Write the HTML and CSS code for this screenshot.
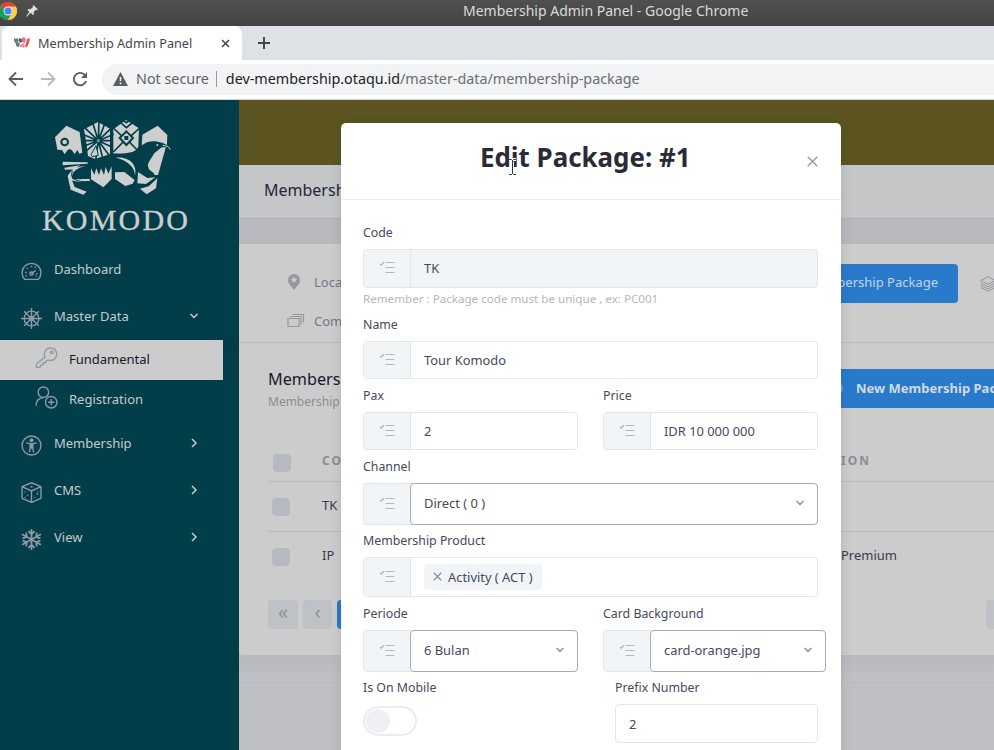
FILE: index.html
```html
<!DOCTYPE html>
<html lang="en">
<head>
<meta charset="utf-8">
<title>Membership Admin Panel</title>
<link rel="stylesheet" href="styles.css">
</head>
<body>
<svg class="defs" width="0" height="0">
  <symbol id="list" viewBox="0 0 16 14"><path d="M1 3l1.200 1L5 1.200" fill="none" stroke="#b4b6c2" stroke-width="1.400"/><path d="M6.500 1.500h9M6.500 6.500h9M6.500 11.500h9" fill="none" stroke="#b4b6c2" stroke-width="1.200"/></symbol>
  <symbol id="right" viewBox="0 0 10 10"><path d="M3 1l4 4-4 4" fill="none" stroke="currentColor" stroke-width="1.500"/></symbol>
  <symbol id="down" viewBox="0 0 10 10"><path d="M1.500 3L5 6.500 8.500 3" fill="none" stroke="currentColor" stroke-width="1.500"/></symbol>
</svg>
<div class="titlebar">
  <svg class="chrome" width="20" height="20" viewBox="0 0 20 20"><circle cx="10" cy="10" r="9" fill="#f2c33d"/><path d="M10 10L2.200 5.500A9 9 0 0 1 17.800 5.500z" fill="#dc4437"/><path d="M10 10L2.200 5.500A9 9 0 0 0 10 19l4-7z" fill="#149e58"/><path d="M10 5.500h7.800A9 9 0 0 1 10 19l4-7z" fill="#fccd46"/><circle cx="10" cy="10" r="4.500" fill="#f3f5f8"/><circle cx="10" cy="10" r="3.600" fill="#4486ef"/></svg>
  <svg class="pin" width="12" height="12" viewBox="0 0 12 12"><path d="M7.500 0L12 4.500l-1.200.6-.8-.4-2.300 2.300.3 2-1 1-2.300-2.300L1 11.500H0L3.300 7 1.500 5l1-1 2 .3 2.500-2.400-.3-.9z" fill="#dedede"/></svg>
  <span class="wintitle">Membership Admin Panel - Google Chrome</span>
</div>
<div class="tabs">
  <div class="tab">
    <svg width="16" height="12" viewBox="0 0 16 12"><path d="M0 1l2 1 1-1 2 2-1 2 2 2-1 3-3-1V7L0 4z" fill="#5a8582"/><path d="M5 1l3 1 0 3-2 1-1-2z" fill="#8d5148"/><path d="M8 1l2-1 2 2-1 4-3-1z" fill="#e8749a"/><path d="M13 2l3-1-1 5-2 4-2 0 1-4z" fill="#dd5a43"/><path d="M5 7l2 1 2-2 2 2-1 3-2-1-2 0z" fill="#e58fa5"/></svg>
    <span>Membership Admin Panel</span>
    <svg class="tabx" width="9" height="9" viewBox="0 0 9 9"><path d="M1 1l7 7M8 1l-7 7" stroke="#45484c" stroke-width="1.600"/></svg>
  </div>
  <svg class="plus" width="12" height="12" viewBox="0 0 12 12"><path d="M6 0v12M0 6h12" stroke="#3f4246" stroke-width="1.900"/></svg>
</div>
<div class="toolbar">
  <svg width="16" height="16" viewBox="0 0 16 16"><path d="M15 8H2M8 1.500L1.500 8 8 14.500" fill="none" stroke="#5a5d61" stroke-width="1.800"/></svg>
  <svg width="16" height="16" viewBox="0 0 16 16"><path d="M1 8h13M8 1.500L14.500 8 8 14.500" fill="none" stroke="#b9bbbe" stroke-width="1.800"/></svg>
  <svg width="16" height="16" viewBox="0 0 16 16"><path d="M14 10a6.200 6.200 0 1 1-1.600-6.400L14 5.200" fill="none" stroke="#5a5d61" stroke-width="1.900"/><path d="M15 1v6H9z" fill="#5a5d61"/></svg>
  <div class="address">
    <svg width="15" height="14" viewBox="0 0 15 14"><path d="M7.500 0L15 14H0z" fill="#5a5d61"/><path d="M7.500 5v4M7.500 10.500v1.700" stroke="#f1f3f4" stroke-width="1.500"/></svg>
    <span class="notsecure">Not secure</span><i></i><span class="url">dev-membership.otaqu.id<em>/master-data/membership-package</em></span>
  </div>
</div>
<div class="app">
  <aside class="sidebar">
    <div class="brand">
      <svg class="emblem" width="125" height="80" viewBox="150 51 375 240">
        <g fill="#cdcece">
          <path d="M165 112l34-35 40 19 8 62-9 3-6-11-8 12-9-12-7-3-5 3-9 13-8-13-14-1z"/>
          <path d="M252 88l42-22 36 20v78l-43 22-3-10-20-8-4-32z"/>
          <path d="M340 88l38-28 39 25-2 55-12 20-63 2z"/>
          <path d="M427 104l46-27 29 28-1 25-27 95-22 0-27-90z"/>
        </g>
        <g stroke="#023e49" stroke-width="5" fill="none">
          <path d="M295 122L276 62M295 122l2-62M295 122l22-58M295 122l41-40M295 122l46-19M295 122l44 0M295 122l42 20M295 122l34 46M295 122l14 56M295 122l-8 60M295 122l-45 38M295 122l-45 17M295 122h-47M295 122l-48-19M295 122l-42-40"/>
          <path d="M340 84l39 36 40-36M340 156l39-40 38 40M360 66l19 17 21-17M361 54l18 14 19-14"/>
          <path d="M379 94l20 20-20 21-20-21z" fill="#cdcece" stroke-width="6"/>
        </g>
        <circle cx="295" cy="122" r="5" fill="#6f9198"/>
        <path d="M373 108h12v12h-12z" fill="#023e49"/>
        <path d="M273 164l15-27 7 29-18 4z" fill="#cdcece" stroke="#023e49" stroke-width="3"/>
        <g fill="#023e49">
          <circle cx="194" cy="126" r="13"/>
          <path d="M262 184l70-22c20-5 32 3 50-3 18-4 25-6 37-19 14-8 22-18 48-16l22 5 14 8-2 5-16 0-22 18-16 25-7 18 20 15 8 14-28 1-15-10-18 22-22 2-70-20-58-28z"/>
        </g>
        <g fill="#cdcece">
          <circle cx="194" cy="126" r="7"/><circle cx="472" cy="135" r="3"/>
          <path d="M273 205l10 19 6-19 8 20 6-20 9 20 5-24 8 20 10-22v38l-25 25-37-24z"/>
          <path d="M345 217l28-1 31 24-6 11-22 7-31-21z"/>
          <path d="M414 216l28 18 24-2-28 20-26-2z"/>
          <path d="M472 235l-4 30-28 18-20-17 26-7z"/>
          <path d="M188 185l75 2v4l-75 5zM193 203l48-7-18 12-28 1zM203 229c8-17 22-30 55-32-31 8-46 21-41 40 10 1 30 0 51-1l3 8c-24 3-42 2-55-3l8 20 36 14-10 9-38-15z"/>
          <path d="M348 173c40-2 65 20 57 55 0-27-22-46-57-55z"/>
        </g>
        <path d="M217 213c-4 11-2 19 4 24 14 8 29 9 49 7" fill="none" stroke="#023e49" stroke-width="3"/>
        <path d="M488 136l16 3 7 10" fill="none" stroke="#cdcece" stroke-width="3"/>
      </svg>
      <svg class="word" width="160" height="36" viewBox="0 0 160 36"><text x="2" y="28" textLength="146" lengthAdjust="spacing">KOMODO</text></svg>
    </div>
    <nav>
      <a class="item"><svg viewBox="0 0 20 20"><path d="M3.500 17.500A9 9 0 1 1 16.500 17.500zM10 12l4-3M10 4.500v1.500M4 11h1.500M14.500 12H16M5.500 6.500l1 1M14 5.500l-.8 1M4.500 14.500l1-.5M15 14.500l-1-.5"/><circle cx="10" cy="12" r="1.500"/></svg><span>Dashboard</span></a>
      <a class="item"><svg viewBox="0 0 20 20"><circle cx="10" cy="10" r="7"/><circle cx="10" cy="10" r="2"/><path d="M10 0v20M0 10h20M3 3l14 14M17 3L3 17"/></svg><span>Master Data</span><svg class="chev"><use href="#down"/></svg></a>
      <a class="sub active"><svg viewBox="0 0 22 22"><path d="M9.500 10.500A6 6 0 1 1 13 13.500l-2 .3-1 2-2 .2-.5 2-2 .2-.7 2.300H1.500v-3.500z"/><circle cx="16" cy="6" r="1.300"/></svg><span>Fundamental</span></a>
      <a class="sub"><svg viewBox="0 0 22 22"><circle cx="8" cy="6" r="5"/><path d="M1 19c0-5 2.500-7.500 7-8M11 9.800l1 .7"/><circle cx="15.500" cy="15.500" r="5.500"/><path d="M15.500 12.500v6M12.500 15.500h6"/></svg><span>Registration</span></a>
      <a class="item"><svg viewBox="0 0 20 20"><circle cx="10" cy="10" r="9"/><circle cx="10" cy="5" r="1.300" fill="#a0a4b2"/><path d="M5 7.500l5 1 5-1M8.700 8.500v4L8 16.500M11.300 8.500v4l.7 4M10 8v5"/></svg><span>Membership</span><svg class="chev"><use href="#right"/></svg></a>
      <a class="item"><svg viewBox="0 0 20 20"><path d="M1 4.500L10 .8l9 3.700v11L10 19.500l-9-4zM1 4.500L10 8.500l9-4M10 8.500v11M9 4.500h2M4 9v1M6.500 12v1M4 14v1M13 14v1M16 9v1M15 12l1-1"/></svg><span>CMS</span><svg class="chev"><use href="#right"/></svg></a>
      <a class="item"><svg viewBox="0 0 20 20" class="snow"><path d="M10 0v20M1 5l18 10M19 5L1 15M7 2l3 3 3-3M7 18l3-3 3 3M1.500 9L5.500 7.500 5 3.500M18.500 9l-4-1.500.5-4M1.500 11l4 1.500-.5 4M18.500 11l-4 1.500.5 4"/></svg><span>View</span><svg class="chev"><use href="#right"/></svg></a>
    </nav>
  </aside>
  <main class="main">
    <div class="topbar"></div>
    <div class="subhead">Membership</div>
    <section class="card">
      <div class="navs">
        <div class="navcol">
          <div class="navline"><svg width="14" height="16" viewBox="0 0 14 16"><path d="M7 16C3 11 1 9 1 6a6 6 0 0 1 12 0c0 3-2 5-6 10z" fill="#9698a2"/><path d="M7 2.500l1 2 2.200.3-1.600 1.600.4 2.200-2-1-2 1 .4-2.200L3.800 4.800 6 4.500z" fill="#ccc"/></svg><span>Location</span></div>
          <div class="navline"><svg width="18" height="16" viewBox="0 0 18 16"><path d="M1 5.500h11v8H1zM3 3.500h11v8M5.500 1.500h11v8" fill="none" stroke="#9698a2" stroke-width="1.200"/></svg><span>Comp</span></div>
        </div>
        <div class="navright"><div class="bluebtn">Membership Package</div><svg width="16" height="16" viewBox="0 0 16 16"><path d="M8 .7l7.300 3.800L8 8.200.7 4.500zM.7 7L8 10.700 15.300 7M.7 9.300L8 13l7.300-3.700M.7 11.500L8 15.300l7.300-3.800" fill="none" stroke="#93959e"/></svg></div>
      </div>
      <div class="cardhead"><div><h3>Membership</h3><p>Membership</p></div><div class="newbtn"><i></i>New Membership Package</div></div>
      <div class="row thead"><i class="check"></i><span>CODE</span><b>DESCRIPTION</b></div>
      <div class="row"><i class="check"></i><span>TK</span></div>
      <div class="row last"><i class="check"></i><span>IP</span><b>Premium</b></div>
      <div class="pager"><i>«</i><i>‹</i><i class="on"></i><i class="end"></i></div>
    </section>
    <div class="foot"></div>
  </main>
</div>
<div class="modal">
  <header><h2>Edit Package: #1</h2><svg width="11" height="11" viewBox="0 0 11 11"><path d="M.7.7l9.600 9.600M10.300.7L.7 10.300" stroke="#989aa8" stroke-width="1.400"/></svg></header>
  <div class="form">
    <div class="group g92"><label>Code</label><div class="input h39 off"><i><svg><use href="#list"/></svg></i><div>TK</div></div><small>Remember : Package code must be unique , ex: PC001</small></div>
    <div class="group g71"><label>Name</label><div class="input"><i><svg><use href="#list"/></svg></i><div>Tour Komodo</div></div></div>
    <div class="cols g71">
      <div class="group"><label>Pax</label><div class="input"><i><svg><use href="#list"/></svg></i><div>2</div></div></div>
      <div class="group"><label>Price</label><div class="input"><i><svg><use href="#list"/></svg></i><div>IDR 10 000 000</div></div></div>
    </div>
    <div class="group g74"><label>Channel</label><div class="input sel"><i><svg><use href="#list"/></svg></i><div>Direct ( 0 )<svg class="caret"><use href="#down"/></svg></div></div></div>
    <div class="group g73"><label>Membership Product</label><div class="input multi"><i><svg><use href="#list"/></svg></i><div><span class="tag"><svg width="9" height="9" viewBox="0 0 9 9"><path d="M.7.7l7.600 7.600M8.300.7L.7 8.300" stroke="#7d8195" stroke-width="1.200"/></svg>Activity ( ACT )</span></div></div></div>
    <div class="cols g74">
      <div class="group"><label>Periode</label><div class="input sel"><i><svg><use href="#list"/></svg></i><div>6 Bulan<svg class="caret"><use href="#down"/></svg></div></div></div>
      <div class="group"><label>Card Background</label><div class="input sel wide"><i><svg><use href="#list"/></svg></i><div>card-orange.jpg<svg class="caret"><use href="#down"/></svg></div></div></div>
    </div>
    <div class="cols prefix">
      <div class="group"><label>Is On Mobile</label><div class="toggle"><i></i></div></div>
      <div class="group"><label>Prefix Number</label><div class="input h39"><div class="solo">2</div></div></div>
    </div>
  </div>
</div>
<svg class="cursor" width="9" height="18" viewBox="0 0 9 18"><path d="M1 1.500h2.500l1 1 1-1H8M4.500 2v14M1 16.500h2.500l1-1 1 1H8" fill="none" stroke="#fff" stroke-width="3"/><path d="M1 1.500h2.500l1 1 1-1H8M4.500 2v14M1 16.500h2.500l1-1 1 1H8" fill="none" stroke="#333"/></svg>
</body>
</html>
```
FILE: styles.css
```css
* { box-sizing: border-box; }
body { margin: 0; width: 994px; height: 750px; overflow: hidden; position: relative; font: 13px/18px "Noto Sans", sans-serif; color: #464a5b; background: #fff; }
svg { flex: none; display: block; }
i, em { font-style: normal; }
.defs { position: absolute; }
.titlebar { height: 26px; display: flex; align-items: center; background: linear-gradient(#505050, #424242); color: #dadada; font-size: 14px; padding-bottom: 4px; }
.chrome { margin-left: -2px; }
.pin { margin-left: 8px; }
.wintitle { margin-left: 425px; white-space: nowrap; }
.tabs { height: 34px; display: flex; align-items: center; background: #dee1e6; }
.tab { width: 240px; height: 34px; margin-left: 2px; padding: 0 12px; display: flex; align-items: center; background: #fff; border-radius: 8px 8px 0 0; color: #45484c; font-size: 12.700px; white-space: nowrap; }
.tab span { margin-left: 8px; }
.tabx { margin-left: auto; }
.plus { margin-left: 16px; }
.toolbar { height: 40px; display: flex; align-items: center; gap: 16px; padding: 0 0 1px 8px; background: #fff; border-bottom: 1px solid #d5d6d8; }
.address { flex: 1; margin-left: -2px; height: 31px; display: flex; align-items: center; padding: 0 0 1px 11px; border-radius: 16px 0 0 16px; background: #f1f3f4; font-size: 14.330px; white-space: nowrap; }
.notsecure { margin-left: 8px; color: #5f6368; }
.address i { width: 1px; height: 16px; margin: 0 9px 0 7px; background: #96999d; }
.url { color: #202124; }
.url em { color: #6a6e73; }
.app { display: flex; height: 650px; }
.sidebar { width: 239px; background: #023e49; flex: none; }
.brand { height: 146px; padding-top: 17px; }
.emblem { margin-left: 50px; }
.word { margin: 5px 0 0 40px; overflow: visible; }
.word text { font: 30px "Liberation Serif", serif; fill: #cdcece; stroke: #cdcece; stroke-width: .3px; }
.item, .sub { display: flex; align-items: center; color: #c3cbcd; height: 47px; padding-left: 21px; }
.item > span, .sub > span { margin-bottom: 2px; }
.item > svg:first-child { width: 21px; height: 21px; margin: 4px 12px 0 0; }
.item > svg:first-child, .sub > svg { fill: none; stroke: #8f98a5; stroke-width: 1.300; }
.item > svg.snow { stroke-width: 1.700 !important; }
.item .chev { width: 10px; height: 10px; margin: 0 40px 1px auto; color: #c3cbcd; }
.sub { height: 40px; width: 223px; padding-left: 35px; }
.sub > svg { width: 23px; height: 23px; margin: -6px 11px 0 0; }
.sub.active { background: #ccc; color: #17182b; }
.main { flex: 1; min-width: 0; background: #b8b8be; overflow: hidden; }
.topbar { height: 65px; background: #5c5521; }
.subhead { height: 54px; padding-left: 25px; line-height: 50px; background: #c4c6c8; border-bottom: 1px solid #aeb0b7; color: #25273a; font-size: 16px; }
.card { height: 411px; margin-top: 25px; background: #ccc; border-radius: 4px 0 0 4px; white-space: nowrap; overflow: hidden; }
.navs { height: 99px; display: flex; border-bottom: 1px solid #b9bbc0; padding: 19px 0 0 48px; color: #71778b; }
.navcol { width: 350px; flex: none; margin-top: -1px; }
.navline { display: flex; align-items: center; height: 39px; }
.navline svg { margin-right: 13px; }
.navline:nth-child(2) svg { margin-right: 9px; }
.navright { display: flex; flex: none; height: 39px; align-items: center; gap: 22px; margin: 1px 0 0 151px; }
.bluebtn { width: 170px; height: 39px; border-radius: 4px; line-height: 37px; padding-right: 20px; text-align: right; background: #2a7acc; color: #c5d4e4; }
.cardhead { height: 97px; padding: 26px 0 0 29px; display: flex; }
.cardhead > div:first-child { width: 564px; flex: none; }
h3 { margin: 0; font: 16.200px/20px "Noto Sans", sans-serif; color: #17182b; }
p { margin: 4px 0 0; font-size: 12px; color: #8b8d97; }
.newbtn { width: 240px; flex: none; height: 39px; background: #2a7acc; color: #d0dae6; font-weight: 700; line-height: 38px; display: flex; align-items: center; padding-bottom: 1px; }
.newbtn i { width: 11px; height: 11px; margin: 0 13px 0 0; border-radius: 6px; background: #6ba0d8; }
.row { height: 50px; margin-left: 29px; display: flex; align-items: center; border-bottom: 1px solid #b9bbc0; color: #393b4b; }
.row span { width: 519px; margin-left: 32px; padding-bottom: 4px; flex: none; }
.row b { font-weight: 400; padding-bottom: 4px; }
.check { width: 18px; height: 18px; margin-left: 4px; border-radius: 4px; background: #b7b9c1; flex: none; }
.thead { height: 42px; font-size: 12px; letter-spacing: 2px; color: #8b8d97; font-weight: 700; padding-top: 4px; }
.thead .check { margin-left: 5px; }
.thead span { width: 450px; margin-left: 31px; padding-bottom: 3px; }
.thead b { font-weight: 700; width: 99px; padding-bottom: 3px; display: flex; justify-content: flex-end; }
.last { border: 0; height: 68px; padding-bottom: 18px; }
.pager { display: flex; gap: 5px; margin-left: 29px; }
.pager i { width: 30px; flex: none; height: 29px; border-radius: 4px; background: #bec1c5; color: #8f929d; font-size: 20px; line-height: 24px; text-align: center; }
.pager i:nth-child(2) { width: 29px; }
.pager .on { background: #2a7acc; }
.pager .end { margin-left: 614px; }
.foot { height: 95px; background: linear-gradient(#b8b9be, #c0c1c5 26px, #b7bcc2 27px, #bfc0c3 29px); }
.modal { position: absolute; left: 341px; top: 123px; width: 500px; height: 640px; background: #fff; border-radius: 5px; box-shadow: 0 0 12px rgba(0, 0, 0, .12); }
.modal header { height: 77px; display: flex; align-items: center; border-bottom: 1px solid #ebedf2; padding: 0 23px 0 139px; }
h2 { margin: -8px 0 0; font: 700 25.900px/36px "Noto Sans", sans-serif; color: #2a2b35; white-space: nowrap; }
header svg { margin: 0 0 0 auto; }
.form { padding: 23px 23px 0 22px; }
.group label { display: block; height: 26px; padding-top: 1px; font-size: 12.350px; }
.g92 { height: 92px; } .g71 { height: 71px; } .g74 { height: 74px; } .g73 { height: 73px; }
.cols { display: grid; grid-template-columns: 215px 215px; gap: 25px; }
.prefix { grid-template-columns: 227px 203px; }
.input { height: 38px; display: flex; border: 1px solid #e2e5ec; border-radius: 4px; font-size: 12.900px; }
.input > i { width: 47px; padding-bottom: 1px; display: flex; align-items: center; justify-content: center; background: #f2f5f8; border-right: 1px solid #e2e5ec; border-radius: 3px 0 0 3px; }
.input > i svg { width: 16px; height: 14px; }
.input > div { flex: 1; padding-left: 13px; display: flex; align-items: center; color: #464a5b; }
.h39 { height: 39px; }
.off > div { padding-bottom: 2px; }
.off { background: #f2f5f8; }
.sel { height: 42px; border-right: 0; }
.sel > i { border-right: 0; width: 46px; }
.sel > div { margin: -1px 0; border: 1px solid #abacb5; border-radius: 4px; padding-bottom: 2px; }
.caret { width: 10px; height: 10px; margin: 0 12px 0 auto; color: #8c90a2; }
.multi { height: 40px; }
.wide { width: 223px; }
.input .solo { padding: 1px 0 0 13px; }
.tag { display: flex; align-items: center; height: 26px; padding: 0 9px 0 9px; background: #f2f5f8; border-radius: 4px; }
.tag svg { margin: -2px 6px 0 0; }
small { display: block; margin-top: 2px; font-size: 11.620px; color: #b5b6c0; }
.toggle { width: 54px; height: 30px; margin-top: 2px; border: 2px solid #ebecf3; border-radius: 15px; padding: 1px; }
.toggle i { display: block; width: 24px; height: 24px; border-radius: 12px; background: #eff0f6; }
.cursor { position: absolute; left: 508px; top: 158px; }
```
